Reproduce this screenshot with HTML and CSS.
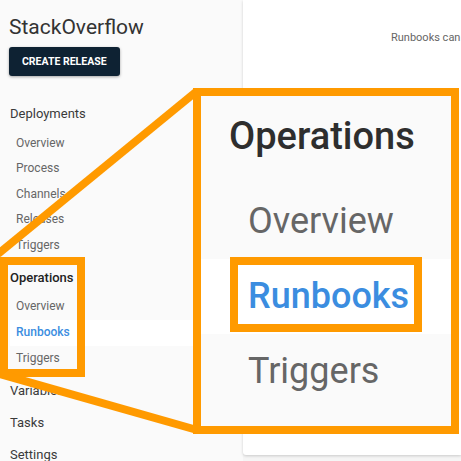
FILE: index.html
```html
<!DOCTYPE html>
<html lang="en">
<head>
<meta charset="utf-8">
<title>StackOverflow – Runbooks</title>
<link rel="stylesheet" href="styles.css">
</head>
<body>
<div class="page">
  <aside class="sidebar">
    <h1 class="project">StackOverflow</h1>
    <button class="btn-release" type="button">CREATE RELEASE</button>
    <nav class="nav">
      <div class="group">
        <div class="group-title">Deployments</div>
        <ul class="sub">
          <li>Overview</li>
          <li>Process</li>
          <li>Channels</li>
          <li>Releases</li>
          <li>Triggers</li>
        </ul>
      </div>
      <div class="group group-ops">
        <div class="group-title active">Operations</div>
        <ul class="sub">
          <li>Overview</li>
          <li class="current">Runbooks</li>
          <li>Triggers</li>
        </ul>
      </div>
      <ul class="top-items">
        <li>Variables</li>
        <li>Tasks</li>
        <li>Settings</li>
      </ul>
    </nav>
  </aside>
  <main class="content">
    <p class="intro">Runbooks can be used to automate routine maintenance and emergency operations tasks</p>
  </main>
</div>

<div class="callout">
  <div class="callout-source"></div>
  <div class="callout-zoom">
    <div class="zoom-title">Operations</div>
    <ul class="zoom-list">
      <li>Overview</li>
      <li class="current">Runbooks</li>
      <li>Triggers</li>
    </ul>
    <div class="zoom-highlight"></div>
  </div>
  <svg class="callout-lines" width="461" height="461" viewBox="0 0 461 461">
    <line x1="-2" y1="254" x2="197" y2="91" />
    <line x1="-2" y1="373.4" x2="197" y2="430" />
  </svg>
</div>
</body>
</html>
```

FILE: styles.css
```css
html, body {
  margin: 0;
  padding: 0;
}

body {
  width: 461px;
  height: 461px;
  overflow: hidden;
  position: relative;
  background: #f5f5f5;
  font-family: Roboto, "Noto Sans", Arial, sans-serif;
}

.page {
  display: flex;
  align-items: flex-start;
}

/* ---------- sidebar ---------- */
.sidebar {
  flex: none;
  width: 243px;
  height: 461px;
  box-sizing: border-box;
  padding-left: 10px;
  background: #fafafa;
  overflow: hidden;
}

.project {
  margin: 0 0 0 -1px;
  padding-top: 13px;
  font-size: 21px;
  font-weight: 400;
  line-height: 28px;
  color: #333;
}

.btn-release {
  display: block;
  margin: 6px 0 0 -1px;
  height: 29px;
  padding: 0 13px;
  border: none;
  border-radius: 3px;
  background: #0e2233;
  color: #fff;
  font-family: Roboto, Arial, sans-serif;
  font-size: 10.5px;
  font-weight: 700;
  box-shadow: 0 1px 3px rgba(0, 0, 0, 0.35);
}

.nav {
  margin-top: 25px;
}

.group-title {
  font-size: 13px;
  line-height: 26px;
  color: #3a3a3a;
  margin-bottom: 3.5px;
}

.group-title.active {
  font-weight: 500;
  color: #222;
}

.group-ops {
  margin-top: 6.5px;
}

.sub {
  list-style: none;
  margin: 0;
  padding: 0;
}

.sub li {
  font-size: 12px;
  line-height: 25.6px;
  padding-left: 6px;
  color: #666;
}

.sub li.current {
  background: #fff;
  color: #3b8de0;
  font-weight: 500;
}

.top-items {
  list-style: none;
  margin: 3.8px 0 0;
  padding: 0;
}

.top-items li {
  font-size: 13px;
  line-height: 32px;
  color: #3a3a3a;
}

/* ---------- main ---------- */
.content {
  flex: 1;
  height: 455px;
  background: #fff;
  border-bottom-left-radius: 3px;
  box-shadow: 0 1px 3px rgba(0, 0, 0, 0.18);
  overflow: hidden;
}

.intro {
  margin: 0;
  padding: 30px 0 0 148px;
  font-size: 11px;
  line-height: 16px;
  color: #666;
  white-space: nowrap;
}

/* ---------- callout annotation ---------- */
.callout-source {
  position: absolute;
  left: 0;
  top: 257px;
  width: 85px;
  height: 120px;
  box-sizing: border-box;
  border: 8px solid #ff9a00;
}

.callout-zoom {
  position: absolute;
  left: 193px;
  top: 88px;
  width: 266px;
  height: 346px;
  box-sizing: border-box;
  border: 8px solid #ff9a00;
  background: #fafafa;
}

.zoom-title {
  margin-top: 10px;
  padding-left: 28px;
  font-size: 38px;
  font-weight: 500;
  line-height: 60px;
  color: #2e2e2e;
}

.zoom-list {
  list-style: none;
  margin: 18px 0 0;
  padding: 0;
}

.zoom-list li {
  font-size: 36px;
  line-height: 75px;
  padding-left: 47px;
  color: #666;
}

.zoom-list li.current {
  background: #fff;
  color: #3b8de0;
  font-weight: 500;
}

.zoom-highlight {
  position: absolute;
  left: 29px;
  top: 161px;
  width: 192px;
  height: 75px;
  box-sizing: border-box;
  border: 8px solid #ff9a00;
}

.callout-lines {
  position: absolute;
  left: 0;
  top: 0;
  pointer-events: none;
}

.callout-lines line {
  stroke: #ff9a00;
  stroke-width: 8;
}
```
